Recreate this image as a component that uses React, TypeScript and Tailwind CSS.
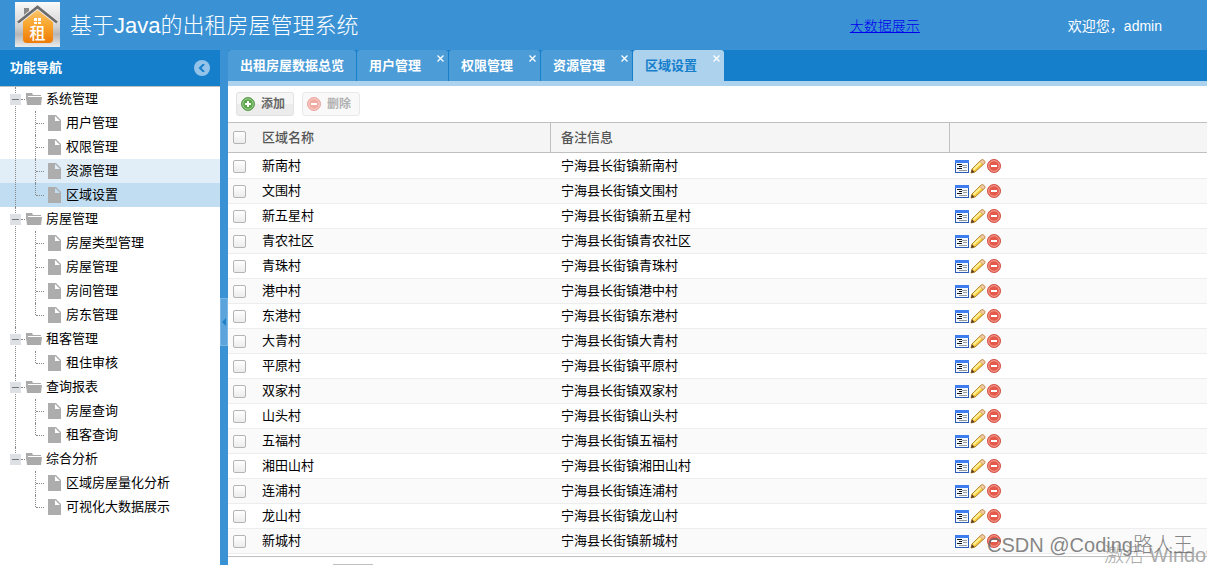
import React from "react";

const FONT = "font-['Liberation_Sans','Noto_Sans_CJK_SC',sans-serif]";

type Item = { label: string; state?: "hover" | "selected" };
type Group = { label: string; items: Item[] };

const groups: Group[] = [
  { label: "系统管理", items: [{ label: "用户管理" }, { label: "权限管理" }, { label: "资源管理", state: "hover" }, { label: "区域设置", state: "selected" }] },
  { label: "房屋管理", items: [{ label: "房屋类型管理" }, { label: "房屋管理" }, { label: "房间管理" }, { label: "房东管理" }] },
  { label: "租客管理", items: [{ label: "租住审核" }] },
  { label: "查询报表", items: [{ label: "房屋查询" }, { label: "租客查询" }] },
  { label: "综合分析", items: [{ label: "区域房屋量化分析" }, { label: "可视化大数据展示" }] },
];

const tabs = ["出租房屋数据总览", "用户管理", "权限管理", "资源管理", "区域设置"];

const villages = ["新南村", "文围村", "新五星村", "青农社区", "青珠村", "港中村", "东港村", "大青村", "平原村", "双家村", "山头村", "五福村", "湘田山村", "连浦村", "龙山村", "新城村"];

function Logo() {
  return (
    <svg width="45" height="45" viewBox="0 0 45 45" className="shrink-0" aria-hidden="true">
      <defs>
        <linearGradient id="plate" x1="0" y1="0" x2="0" y2="1">
          <stop offset="0" stopColor="#fafafa" />
          <stop offset=".55" stopColor="#d2d2d2" />
          <stop offset=".72" stopColor="#b5b5b5" />
          <stop offset="1" stopColor="#ececec" />
        </linearGradient>
        <linearGradient id="house" x1="0" y1="0" x2="0" y2="1">
          <stop offset="0" stopColor="#fcc873" />
          <stop offset=".5" stopColor="#f8a42c" />
          <stop offset="1" stopColor="#ee7a05" />
        </linearGradient>
      </defs>
      <rect width="45" height="45" fill="url(#plate)" />
      <path d="M9 6h5v5l-5 4z" fill="#888" />
      <path d="M22.500 6 38 18v19q0 4-4 4H12q-4 0-4-4V18z" fill="url(#house)" />
      <path d="M3 20.500 22.500 5 42 20.500" fill="none" stroke="#eee" strokeWidth="4.500" />
      <path d="M3 20.500 22.500 5 42 20.500" fill="none" stroke="#6c6c6c" strokeWidth="2.800" />
      <path d="M19 16h3v3h-3zM23 16h3v3h-3zM19 20h3v2h-3zM23 20h3v2h-3z" fill="#fff" />
      <text x="22.500" y="37" textAnchor="middle" fontSize="16" fontWeight="500" fill="#fff">租</text>
    </svg>
  );
}

function Folder() {
  return (
    <svg width="16" height="12" viewBox="0 0 16 12" className="shrink-0" aria-hidden="true">
      <path d="M0 0h6l1 2h8v1H2L0 8z" fill="#aaa" />
      <path d="M0 4h16l-1 8H1z" fill="#aaa" />
    </svg>
  );
}

function Page() {
  return (
    <svg width="13" height="16" viewBox="0 0 13 16" className="shrink-0" aria-hidden="true">
      <path d="M0 0h7v6h6v10H0z" fill="#adadad" />
      <path d="M7 0h1l5 5v1h-1L7 1z" fill="#adadad" />
    </svg>
  );
}

function AddIcon() {
  return (
    <svg width="14" height="14" viewBox="0 0 14 14" aria-hidden="true">
      <circle cx="7" cy="7" r="6.400" fill="#5aa548" stroke="#4c9440" />
      <circle cx="7" cy="7" r="5.200" fill="none" stroke="#a5d598" />
      <path d="M7 4v6M4 7h6" stroke="#fff" strokeWidth="2" />
    </svg>
  );
}

function RemoveIcon() {
  return (
    <svg width="14" height="14" viewBox="0 0 14 14" aria-hidden="true">
      <circle cx="7" cy="7" r="6.500" fill="#e4594a" stroke="#d35347" />
      <circle cx="7" cy="7" r="5.300" fill="none" stroke="#f3a399" />
      <path d="M4 7h6" stroke="#fff" strokeWidth="2" />
    </svg>
  );
}

function DetailIcon() {
  return (
    <svg width="14" height="13" viewBox="0 0 14 13" shapeRendering="crispEdges" aria-hidden="true">
      <rect width="14" height="13" fill="#2c5cb4" />
      <rect width="14" height="3" fill="#3f7ef0" />
      <rect x="1" y="3" width="12" height="9" fill="#f3f8fc" />
      <path d="M2 4h5v1H2zM4 6h3v1H4zM2 8h5v1H2z" fill="#111" />
      <path d="M7 5h5v1H7zM8 7h4v1H8zM4 10h8v1H4z" fill="#999" />
    </svg>
  );
}

function PencilIcon() {
  return (
    <svg width="16" height="15" viewBox="0 0 16 15" aria-hidden="true">
      <path d="M1 14l1-4L11 1.200q1.500-1 3 .3t.6 2.800L5 13z" fill="#f6cb3c" stroke="#a8741f" strokeWidth=".9" />
      <path d="M3.500 10.500 11 3.500" stroke="#fff29a" strokeWidth="1.800" />
      <path d="M11 1.200q1.500-1 3 .3t.6 2.800L13 5.500 9.800 2.500z" fill="#f0cba4" stroke="#b98254" strokeWidth=".5" />
      <path d="M1 14l1-3.500L4.500 13z" fill="#53372a" />
    </svg>
  );
}

function Box({ label }: { label: string }) {
  return (
    <input
      type="checkbox"
      aria-label={label}
      className="block size-3.25 appearance-none rounded-[2px] border border-[#b4b4b4] bg-linear-to-b from-white to-[#ececec] checked:bg-[#2f8ad6]"
    />
  );
}

function Tree() {
  return (
    <ul className="text-[13px] leading-6 text-black">
      {groups.map((g, gi) => (
        <li key={g.label} className="relative">
          <span className={`absolute left-[15px] top-0 z-10 border-l border-dotted border-[#888] ${gi === groups.length - 1 ? "h-3" : "h-full"}`} />
          <div className="flex h-6 items-center pl-2.5">
            <button aria-label={`折叠${g.label}`} className="relative z-20 flex size-[11px] items-center justify-center bg-[#dde0e5]">
              <span className="h-px w-[7px] bg-[#777]" />
            </button>
            <span className="mr-px w-1 border-t border-dotted border-[#888]" />
            <Folder />
            <span className="pl-1">{g.label}</span>
          </div>
          <ul>
            {g.items.map((it, i) => (
              <li key={it.label} className={it.state === "selected" ? "bg-[#c0ddf2]" : it.state === "hover" ? "bg-[#e1eef8]" : ""}>
                <a href="#" className="relative flex h-6 items-center pl-9">
                  <span className={`absolute left-[35px] top-0 border-l border-dotted border-[#888] ${i === g.items.length - 1 ? "h-3" : "h-full"}`} />
                  <span className="mr-1 w-2 border-t border-dotted border-[#888]" />
                  <Page />
                  <span className="pl-[5px]">{it.label}</span>
                </a>
              </li>
            ))}
          </ul>
        </li>
      ))}
    </ul>
  );
}

export default function App() {
  return (
    <div className={`relative flex h-screen flex-col overflow-hidden bg-[#3a92d5] ${FONT}`}>
      <header className="flex h-[50px] shrink-0 items-center pl-[15px] pr-[45px] pt-0.5 text-white">
        <div className="pb-1"><Logo /></div>
        <h1 className="flex-1 pl-2.5 font-['Liberation_Sans','Noto_Sans_CJK_SC_Light','Noto_Sans_CJK_SC',sans-serif] text-[22px] font-light leading-8">基于Java的出租房屋管理系统</h1>
        <a href="#" className="mr-37 font-['Liberation_Sans','Noto_Sans_CJK_SC_Light','Noto_Sans_CJK_SC',sans-serif] text-[14px] font-light text-[#0000ee] underline">大数据展示</a>
        <span className="text-[14px]">欢迎您，admin</span>
      </header>
      <div className="flex min-h-0 flex-1">
        <aside className="w-55 shrink-0 bg-white">
          <div className="flex h-9 items-center justify-between bg-[#157fcc] px-2.5 text-[13px] font-bold text-white">
            <h2>功能导航</h2>
            <button aria-label="收起" className="flex size-4 items-center justify-center rounded-full bg-[#93c3e8]">
              <svg width="8" height="8" viewBox="0 0 8 8" aria-hidden="true"><path d="M6 0 2 4l4 4" fill="none" stroke="#157fcc" strokeWidth="2" /></svg>
            </button>
          </div>
          <div className="border-t border-[#c0c0c0]"><Tree /></div>
        </aside>
        <div className="flex w-2 shrink-0 flex-col items-center justify-center pb-1 pt-[33px]">
          <button aria-label="折叠导航" className="flex h-12 w-2 items-center justify-center border border-[#7ab5e3] bg-[#5ba5dc]">
            <svg width="4" height="8" viewBox="0 0 4 8" className="shrink-0" aria-hidden="true"><path d="M4 0v8L0 4z" fill="#2180c6" /></svg>
          </button>
        </div>
        <main className="flex min-w-0 flex-1 flex-col bg-white">
          <nav className="flex h-9 shrink-0 gap-px border-b-[5px] border-[#add2ed] bg-[#157fcc] text-[13px] font-bold">
            {tabs.map((t, i) => (
              <div key={t} className={`relative rounded-t-[3px] ${i === 4 ? "bg-[#add2ed] text-[#157fcc]" : "bg-[#4b9cd7] text-white"}`}>
                <button className={`h-full pl-3 ${i === 0 ? "pr-3" : "pr-[27px]"}`}>{t}</button>
                {i > 0 && (
                  <button aria-label={`关闭${t}`} className="absolute right-1 top-1 flex size-2 items-center justify-center text-white">
                    <svg width="7" height="7" viewBox="0 0 7 7" aria-hidden="true"><path d="M.5.5l6 6M6.500.5l-6 6" stroke="currentColor" strokeWidth="1.300" /></svg>
                  </button>
                )}
              </div>
            ))}
          </nav>
          <div className="flex h-9 shrink-0 items-center gap-2 px-2 text-[12px] font-bold text-[#666]">
            <button className="flex h-6 items-center gap-1.5 rounded-[3px] border border-[#e1e1e1] bg-linear-to-b from-[#f6f6f6] from-50% to-[#ececec] to-50% px-1"><AddIcon /><span className="pr-1">添加</span></button>
            <button disabled className="flex h-6 items-center gap-1.5 rounded-[3px] border border-[#d4d4d4] bg-[#f5f5f5] px-1 opacity-50"><RemoveIcon /><span className="pr-1">删除</span></button>
          </div>
          <div className="border-b border-[#c0c0c0] pb-0.5">
            <table className="w-full table-fixed border-separate border-spacing-0 text-left text-[13px] leading-5 text-black">
              <colgroup><col className="w-6" /><col className="w-[299px]" /><col className="w-[399px]" /><col /></colgroup>
              <thead>
                <tr className="h-[31px] bg-[#f5f5f5] font-medium text-[#555]">
                  <th className="border-y border-[#c0c0c0] pl-[5px]"><Box label="全选" /></th>
                  <th className="border-y border-r border-[#c0c0c0] pl-2.5 font-medium">区域名称</th>
                  <th className="border-y border-r border-[#c0c0c0] pl-2.5 font-medium">备注信息</th>
                  <th aria-label="操作" className="border-y border-[#c0c0c0]" />
                </tr>
              </thead>
              <tbody>
                {villages.map((v) => (
                  <tr key={v} className="h-[25px] odd:bg-white even:bg-[#fafafa] first:h-[26px] first:*:pt-px">
                    <td className="border-b border-[#ededed] pl-[5px]"><Box label={v} /></td>
                    <td className="border-b border-[#ededed] pl-2.5">{v}</td>
                    <td className="border-b border-[#ededed] pl-2.5">宁海县长街镇{v}</td>
                    <td className="border-b border-[#ededed] pl-[5px]">
                      <div className="flex items-center gap-px">
                        <button aria-label="详情"><DetailIcon /></button>
                        <button aria-label="编辑"><PencilIcon /></button>
                        <button aria-label="删除"><RemoveIcon /></button>
                      </div>
                    </td>
                  </tr>
                ))}
              </tbody>
            </table>
          </div>
          <div className="flex flex-1 items-end pl-[105px]"><span className="h-px w-10 bg-[#c0c0c0]" /></div>
        </main>
      </div>
      <div className="pointer-events-none absolute -bottom-1 left-[1104px] whitespace-nowrap font-['Liberation_Sans','Noto_Sans_CJK_SC_Light','Noto_Sans_CJK_SC',sans-serif] text-[20px] font-light leading-7 text-[#aaa]">激活 Windows</div>
      <div className="pointer-events-none absolute bottom-2 right-3.5 font-['Liberation_Sans','Noto_Sans_CJK_SC_Light','Noto_Sans_CJK_SC',sans-serif] text-[20px] font-light leading-6 text-[#666]/80">CSDN @Coding路人王</div>
    </div>
  );
}
